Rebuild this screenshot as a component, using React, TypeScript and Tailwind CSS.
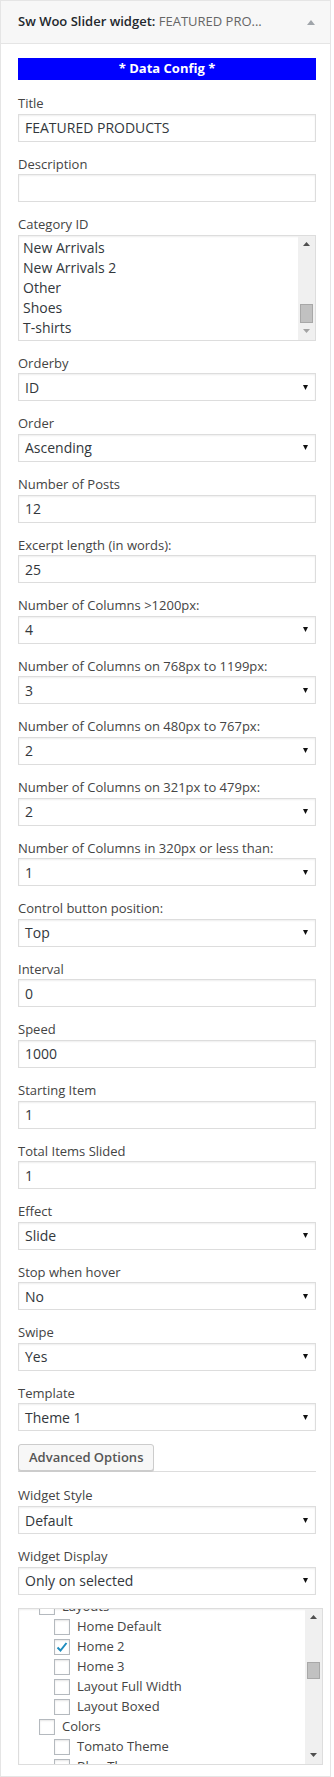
import React from "react";

interface Field {
  kind: "input" | "select";
  label: string;
  value: string;
}

interface CheckItem {
  label: string;
  level: 1 | 2;
  checked?: boolean;
}

const sliderFields: Field[] = [
  { kind: "select", label: "Orderby", value: "ID" },
  { kind: "select", label: "Order", value: "Ascending" },
  { kind: "input", label: "Number of Posts", value: "12" },
  { kind: "input", label: "Excerpt length (in words):", value: "25" },
  { kind: "select", label: "Number of Columns >1200px:", value: "4" },
  { kind: "select", label: "Number of Columns on 768px to 1199px:", value: "3" },
  { kind: "select", label: "Number of Columns on 480px to 767px:", value: "2" },
  { kind: "select", label: "Number of Columns on 321px to 479px:", value: "2" },
  { kind: "select", label: "Number of Columns in 320px or less than:", value: "1" },
  { kind: "select", label: "Control button position:", value: "Top" },
  { kind: "input", label: "Interval", value: "0" },
  { kind: "input", label: "Speed", value: "1000" },
  { kind: "input", label: "Starting Item", value: "1" },
  { kind: "input", label: "Total Items Slided", value: "1" },
  { kind: "select", label: "Effect", value: "Slide" },
  { kind: "select", label: "Stop when hover", value: "No" },
  { kind: "select", label: "Swipe", value: "Yes" },
  { kind: "select", label: "Template", value: "Theme 1" },
];

const categories = ["New Arrivals", "New Arrivals 2", "Other", "Shoes", "T-shirts"];

const pages: CheckItem[] = [
  { label: "Layouts", level: 1 },
  { label: "Home Default", level: 2 },
  { label: "Home 2", level: 2, checked: true },
  { label: "Home 3", level: 2 },
  { label: "Layout Full Width", level: 2 },
  { label: "Layout Boxed", level: 2 },
  { label: "Colors", level: 1 },
  { label: "Tomato Theme", level: 2 },
  { label: "Blue Theme", level: 2 },
  { label: "Green Theme", level: 2 },
];

const Label = ({ children }: { children: React.ReactNode }) => (
  <label className="block leading-[19.6px] text-[#444]">{children}</label>
);

const Arrow = ({ up, color }: { up?: boolean; color: string }) => (
  <svg width="7" height="4" viewBox="0 0 7 4">
    <polygon points={up ? "0,4 7,4 3.5,0" : "0,0 7,0 3.5,4"} fill={color} />
  </svg>
);

function Scrollbar({ before, thumb, downColor }: { before?: number; thumb: number; downColor: string }) {
  return (
    <div className="flex w-[17px] flex-col bg-[#f0f0f0]">
      <div className="flex h-[17px] items-center justify-center">
        <Arrow up color="#505050" />
      </div>
      {before !== undefined ? <div style={{ height: before }} /> : <div className="flex-1" />}
      <div className="mx-[2px] border border-[#a8a8a8] bg-[#c1c1c1]" style={{ height: thumb }} />
      {before !== undefined && <div className="flex-1" />}
      <div className="flex h-[17px] items-center justify-center">
        <Arrow color={downColor} />
      </div>
    </div>
  );
}

function FieldRow({ field }: { field: Field }) {
  return (
    <div className="mb-[13px]">
      <Label>{field.label}</Label>
      {field.kind === "input" ? (
        <input
          readOnly
          value={field.value}
          className="block h-[28px] w-[298px] border border-[#ddd] px-[6px] text-[14px] text-[#32373c] shadow-[inset_0_1px_2px_rgba(0,0,0,0.07)] outline-none"
        />
      ) : (
        <div className="flex h-[28px] w-[298px] items-center justify-between border border-[#ddd] pl-[6px] pr-[7px] text-[14px] text-[#32373c] shadow-[inset_0_1px_2px_rgba(0,0,0,0.07)]">
          <span>{field.value}</span>
          <svg width="5" height="5" viewBox="0 0 5 5">
            <polygon points="0,0 5,0 2.5,5" fill="#111" />
          </svg>
        </div>
      )}
    </div>
  );
}

export default function App() {
  return (
    <div className="w-[331px] border border-[#e5e5e5] bg-white font-['Open_Sans',sans-serif] text-[13px] text-[#444]">
      <div className="flex h-[43px] items-center justify-between border-b border-[#e5e5e5] bg-[#f7f7f7] pl-[17px] pr-[15px]">
        <h3 className="font-semibold text-[#23282d]">
          Sw Woo Slider widget: <span className="font-normal text-[#666]">FEATURED PRO...</span>
        </h3>
        <svg width="8" height="5" viewBox="0 0 8 5">
          <polygon points="0,5 8,5 4,0" fill="#a0a5aa" />
        </svg>
      </div>

      <div className="pb-[11px] pl-[17px] pr-[7px] pt-[14px]">
        <div className="mb-[14px] flex h-[22px] w-[298px] items-center justify-center bg-[#0000ff] font-bold text-white">
          * Data Config *
        </div>

        <FieldRow field={{ kind: "input", label: "Title", value: "FEATURED PRODUCTS" }} />
        <FieldRow field={{ kind: "input", label: "Description", value: "" }} />

        <div className="mb-[13px]">
          <Label>Category ID</Label>
          <div className="flex h-[106px] w-[298px] border border-[#ddd] shadow-[inset_0_1px_2px_rgba(0,0,0,0.07)]">
            <div className="flex-1 pl-[4px] pt-[2px] text-[14px] leading-[20px] text-[#32373c]">
              {categories.map((c) => (
                <div key={c}>{c}</div>
              ))}
            </div>
            <Scrollbar thumb={19} downColor="#a3a3a3" />
          </div>
        </div>

        {sliderFields.map((f) => (
          <FieldRow key={f.label} field={f} />
        ))}

        <div className="mb-[14px] flex w-[298px] items-start border-b border-[#ddd]">
          <button className="h-[27px] rounded-[3px] border border-[#ccc] bg-[#f7f7f7] px-[10px] font-semibold text-[#555] shadow-[0_1px_0_#ccc]">
            Advanced Options
          </button>
        </div>

        <FieldRow field={{ kind: "select", label: "Widget Style", value: "Default" }} />
        <FieldRow field={{ kind: "select", label: "Widget Display", value: "Only on selected" }} />

        <div className="flex h-[157px] w-[305px] border border-[#ddd] shadow-[inset_0_1px_2px_rgba(0,0,0,0.07)]">
          <div className="flex-1 overflow-hidden">
            <div className="-mt-[12px] pl-[20px]">
              {pages.map((p) => (
                <div
                  key={p.label}
                  className={`flex h-[20px] items-center gap-[7px] ${p.level === 2 ? "pl-[15px]" : ""}`}
                >
                  <span className="flex h-4 w-4 shrink-0 items-center justify-center border border-[#b4b9be] bg-white shadow-[inset_0_1px_2px_rgba(0,0,0,0.1)]">
                    {p.checked && (
                      <svg width="14" height="14" viewBox="0 0 14 14">
                        <path d="M2.5 7.5 L5.5 10.5 L11.5 3" fill="none" stroke="#1e8cbe" strokeWidth="2" />
                      </svg>
                    )}
                  </span>
                  <span className="text-[#444]">{p.label}</span>
                </div>
              ))}
            </div>
          </div>
          <Scrollbar before={36} thumb={17} downColor="#505050" />
        </div>
      </div>
    </div>
  );
}
